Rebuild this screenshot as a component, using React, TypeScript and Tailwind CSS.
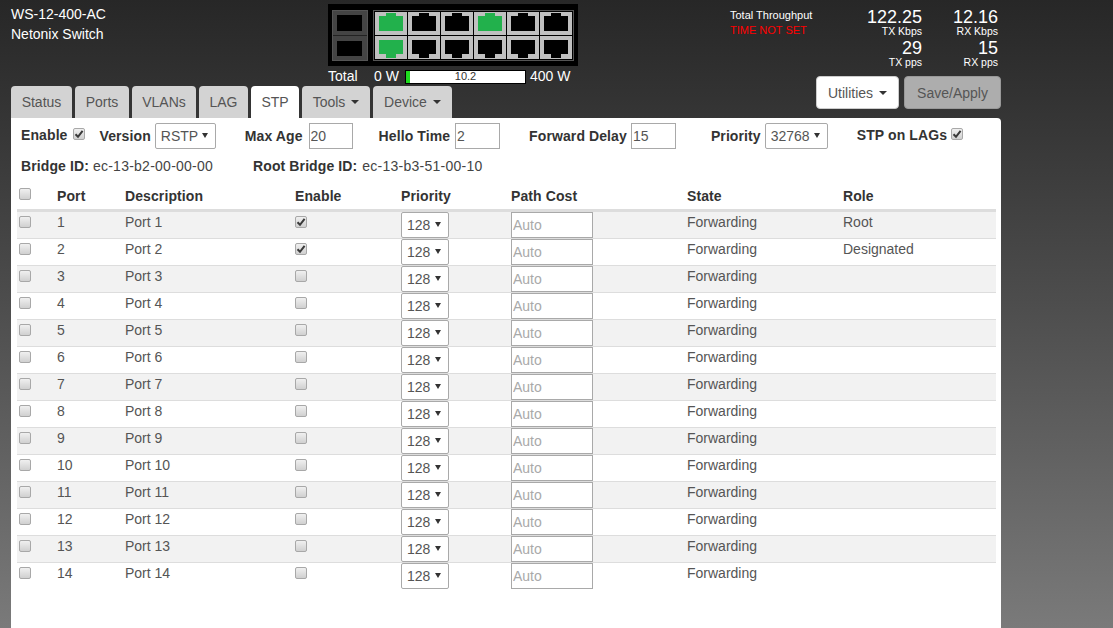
const tabs = [
  { name: 'Status', width: 'w-[61px]' },
  { name: 'Ports', width: 'w-[54px]' },
  { name: 'VLANs', width: 'w-[64px]' },
  { name: 'LAG', width: 'w-[49px]' },
  { name: 'STP', width: 'w-[48px]', active: true },
  { name: 'Tools', width: 'w-[68px]', caret: true },
  { name: 'Device', width: 'w-[79px]', caret: true },
];

const roles: Record<number, string> = { 1: 'Root', 2: 'Designated' };
const ports = Array.from({ length: 14 }, (_, i) => i + 1);

function Caret({ className }: { className: string }) {
  return <span className={`inline-block w-0 h-0 border-x-[4px] border-x-transparent border-t-[4px] ${className}`} />;
}

function Check({ checked = false }: { checked?: boolean }) {
  return (
    <span className="inline-flex items-center justify-center w-[12px] h-[12px] rounded-[2px] border border-[#a8a8a8] bg-gradient-to-b from-[#f0f0f0] to-[#d0d0d0]">
      {checked && (
        <svg width="10" height="10" viewBox="0 0 10 10">
          <path d="M1.5 5.2 L4 7.8 L8.6 1.8" fill="none" stroke="#3a3a3a" strokeWidth="2" />
        </svg>
      )}
    </span>
  );
}

function Select({ value, className }: { value: string; className: string }) {
  return (
    <span className={`inline-flex items-center justify-between h-[26px] pl-[5px] pr-[7px] bg-white border border-[#a9a9a9] rounded-[2px] text-[14px] text-[#555] ${className}`}>
      {value}
      <svg width="6" height="5" viewBox="0 0 6 5" className="mt-[-2px]">
        <path d="M0 0 H6 L3 5 Z" fill="#333" />
      </svg>
    </span>
  );
}

function TextBox({ value, className }: { value: string; className: string }) {
  return (
    <input
      readOnly
      value={value}
      className={`h-[26px] pl-[1px] bg-white border border-[#a9a9a9] text-[14px] text-[#555] outline-none ${className}`}
    />
  );
}

function SwitchGraphic() {
  const cols = [0, 1, 2, 3, 4, 5];
  const up = [0, 3];
  const down = [0];
  return (
    <svg width="250" height="62" viewBox="0 0 250 62" className="block">
      <rect width="250" height="62" fill="#000" />
      <rect x="4.5" y="6.5" width="35" height="50" fill="#444" stroke="#555" />
      <rect x="5" y="31" width="34" height="1" fill="#222" />
      <rect x="9" y="11" width="25" height="16" fill="#000" />
      <rect x="9" y="37" width="25" height="15" fill="#000" />
      <rect x="45.5" y="6.5" width="200" height="50" fill="#000" stroke="#555" />
      {cols.map((c) => {
        const x = 47 + c * 33;
        return (
          <g key={c}>
            <rect x={x} y="8" width="32" height="23" fill="#c0c0c0" />
            <rect x={x} y="32" width="32" height="23" fill="#c0c0c0" />
            <path
              d={`M${x + 4} 12 h7 v-3 h10 v3 h7 v15 h-24 z`}
              fill={up.includes(c) ? '#22b14c' : '#000'}
            />
            <path
              d={`M${x + 4} 36 h24 v14 h-7 v4 h-10 v-4 h-7 z`}
              fill={down.includes(c) ? '#22b14c' : '#000'}
            />
          </g>
        );
      })}
    </svg>
  );
}

export default function App() {
  return (
    <div className="h-screen overflow-hidden bg-gradient-to-b from-[#272727] to-[#7a7a7a] font-['Liberation_Sans',Arial,sans-serif] text-[14px] text-[#555]">
      {/* Header */}
      <div className="flex h-[86px]">
        <div className="w-[328px] pl-[11px] pt-[4px] text-white text-[14px] leading-[20px]">
          <div>WS-12-400-AC</div>
          <div>Netonix Switch</div>
        </div>

        <div className="w-[250px] pt-[4px]">
          <SwitchGraphic />
          <div className="flex items-center h-[17px] mt-[2px] text-white text-[14px]">
            <span className="w-[46px]">Total</span>
            <span className="w-[31px]">0 W</span>
            <div className="relative w-[121px] h-[14px] bg-white border border-black mr-[4px]">
              <div className="w-[4px] h-full bg-[#1fdc1f]" />
              <span className="absolute inset-0 text-center text-[#333] text-[11px] leading-[10px]">10.2</span>
            </div>
            <span className="whitespace-nowrap">400 W</span>
          </div>
        </div>

        <div className="w-[180px] ml-[152px] pt-[8px] text-[11px] leading-[15px]">
          <div className="text-white">Total Throughput</div>
          <div className="text-[#ff0000]">TIME NOT SET</div>
        </div>

        <div className="flex flex-col ml-[-74px]">
          <div className="grid grid-cols-[86px_76px] text-right text-white">
            <div className="text-[18px] leading-[14px] pt-[10px]">122.25</div>
            <div className="text-[18px] leading-[14px] pt-[10px]">12.16</div>
            <div className="text-[10.5px] leading-[12px] pt-[1px]">TX Kbps</div>
            <div className="text-[10.5px] leading-[12px] pt-[1px]">RX Kbps</div>
            <div className="text-[18px] leading-[14px] pt-[4px]">29</div>
            <div className="text-[18px] leading-[14px] pt-[4px]">15</div>
            <div className="text-[10.5px] leading-[12px] pt-[1px]">TX pps</div>
            <div className="text-[10.5px] leading-[12px] pt-[1px]">RX pps</div>
          </div>
        </div>
      </div>

      {/* Tabs */}
      <div className="flex items-end h-[32px] pl-[11px] pr-[112px]">
        <div className="flex gap-[3px] h-[32px]">
          {tabs.map((t) => (
            <div
              key={t.name}
              className={`${t.width} flex items-center justify-center gap-[6px] rounded-t-[4px] ${t.active ? 'bg-white' : 'bg-[#d3d3d3]'}`}
            >
              {t.name}
              {t.caret && <Caret className="border-t-[#333]" />}
            </div>
          ))}
        </div>
        <div className="flex gap-[5px] ml-auto mb-[9px]">
          <button className="flex items-center justify-center gap-[6px] w-[83px] h-[33px] pt-[1px] rounded-[4px] bg-white border border-[#ccc] text-[#555]">
            Utilities
            <Caret className="border-t-[#333]" />
          </button>
          <button className="w-[97px] h-[33px] pt-[1px] rounded-[4px] bg-[#adadad] border border-[#999] text-[#555]">Save/Apply</button>
        </div>
      </div>

      {/* Panel */}
      <div className="w-[990px] h-[520px] ml-[11px] bg-white rounded-tr-[4px] pt-[5px] pl-[6px]">
        <div className="flex items-center h-[26px] pl-[4px] font-bold tracking-[0.1px] text-[#333]">
          <span className="mt-[-2px]">Enable</span>
          <span className="ml-[5px] mt-[-5px] flex"><Check checked /></span>
          <span className="ml-[15px]">Version</span>
          <Select value="RSTP" className="ml-[4px] w-[61px] font-normal tracking-normal" />
          <span className="ml-[29px]">Max Age</span>
          <TextBox value="20" className="ml-[6px] w-[44px] font-normal tracking-normal" />
          <span className="ml-[26px]">Hello Time</span>
          <TextBox value="2" className="ml-[5px] w-[45px] font-normal tracking-normal" />
          <span className="ml-[29px]">Forward Delay</span>
          <TextBox value="15" className="ml-[4px] w-[45px] font-normal tracking-normal" />
          <span className="ml-[35px]">Priority</span>
          <Select value="32768" className="ml-[4px] w-[63px] font-normal tracking-normal" />
          <span className="ml-[29px] mt-[-2px]">STP on LAGs</span>
          <span className="ml-[4px] mt-[-5px] flex"><Check checked /></span>
        </div>

        <div className="flex items-center h-[20px] mt-[7px] pl-[4px] text-[#444]">
          <b className="tracking-[0.1px] text-[#333]">Bridge ID:</b>
          <span className="ml-[4px] tracking-[0.25px]">ec-13-b2-00-00-00</span>
          <b className="ml-[40px] tracking-[0.1px] text-[#333]">Root Bridge ID:</b>
          <span className="ml-[5px] tracking-[0.25px]">ec-13-b3-51-00-10</span>
        </div>

        <table className="w-[979px] mt-[8px] table-fixed border-collapse">
          <colgroup>
            <col className="w-[40px]" />
            <col className="w-[68px]" />
            <col className="w-[170px]" />
            <col className="w-[106px]" />
            <col className="w-[110px]" />
            <col className="w-[176px]" />
            <col className="w-[156px]" />
            <col />
          </colgroup>
          <thead>
            <tr className="h-[26px] border-b-[3px] border-[#ddd] text-left font-bold tracking-[0.1px] text-[#333]">
              <th className="pl-[2px] font-bold"><span className="flex mt-[-4px]"><Check /></span></th>
              <th className="font-bold">Port</th>
              <th className="font-bold">Description</th>
              <th className="font-bold">Enable</th>
              <th className="font-bold">Priority</th>
              <th className="font-bold">Path Cost</th>
              <th className="font-bold">State</th>
              <th className="font-bold">Role</th>
            </tr>
          </thead>
          <tbody>
            {ports.map((p) => (
              <tr key={p} className={`h-[27px] border-t border-[#ddd] first:border-t-0 ${p % 2 === 1 ? 'bg-[#f2f2f2]' : 'bg-white'}`}>
                <td className="pl-[2px] align-top pt-[4px]"><span className="flex"><Check /></span></td>
                <td className="align-top pt-[1px] leading-[18px]">{p}</td>
                <td className="align-top pt-[1px] leading-[18px]">Port {p}</td>
                <td className="align-top pt-[4px]"><span className="flex"><Check checked={p < 3} /></span></td>
                <td className="align-top p-0"><Select value="128" className="w-[48px] align-top pt-[1px]" /></td>
                <td className="align-top p-0">
                  <input readOnly placeholder="Auto" className="block w-[82px] h-[26px] pl-[1px] bg-white border border-[#a9a9a9] text-[14px] outline-none placeholder:text-[#a9a9a9]" />
                </td>
                <td className="align-top pt-[1px] leading-[18px]">Forwarding</td>
                <td className="align-top pt-[1px] leading-[18px]">{roles[p]}</td>
              </tr>
            ))}
          </tbody>
        </table>
      </div>
    </div>
  );
}
